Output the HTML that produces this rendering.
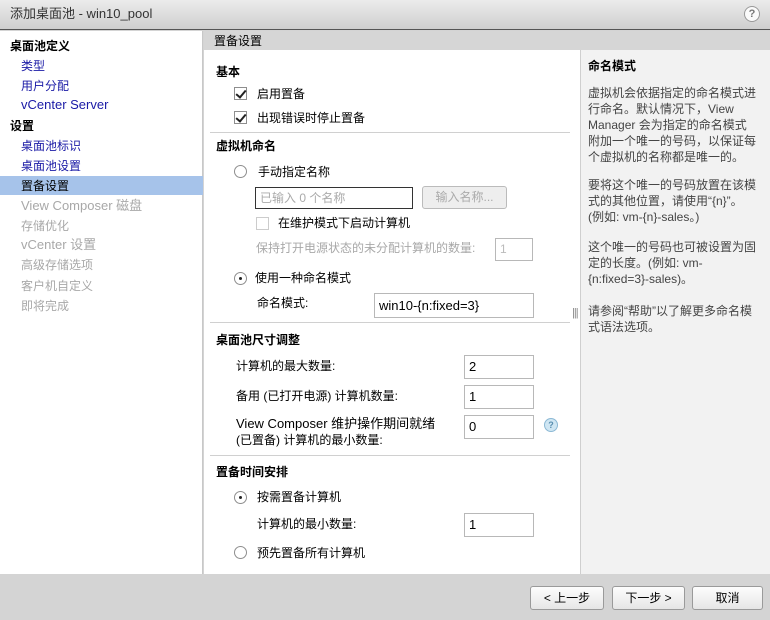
<!DOCTYPE html>
<html><head><meta charset="utf-8"><style>
*{margin:0;padding:0;box-sizing:border-box}
body{width:770px;height:620px;overflow:hidden;background:#d4d4d4;font-family:"Liberation Sans","Noto Sans CJK SC",sans-serif;font-size:12px;color:#000;position:relative}
.a{position:absolute;white-space:nowrap;line-height:14px}
.b{font-weight:bold}
.l{color:#1a1aa6}
.g{color:#a8a8a8}
.cb{position:absolute;width:13px;height:13px;border:1px solid #8e8e8e;background:#fff}
.cb.on::after{content:"";position:absolute;left:3px;top:0px;width:4px;height:8px;border:solid #222;border-width:0 2px 2px 0;transform:rotate(40deg)}
.rd{position:absolute;width:13px;height:13px;border:1px solid #8e8e8e;border-radius:50%;background:#fff}
.rd.on::after{content:"";position:absolute;left:4px;top:4px;width:3px;height:3px;border-radius:50%;background:#222}
.in{position:absolute;border:1px solid #b8b8b8;background:#fff;padding-left:4px;line-height:20px;font-size:13px}
.sep{position:absolute;left:210px;width:360px;height:1px;background:#d0d0d0}
.btn{position:absolute;top:586px;height:24px;border:1px solid #9a9a9a;border-radius:3px;background:linear-gradient(#fdfdfd,#e6e6e6);text-align:center;line-height:22px;font-size:12px}
</style></head><body>
<div style="position:absolute;left:0;top:0;width:770px;height:30px;background:linear-gradient(#ececec,#cfcfcf);border-bottom:1px solid #555"></div>
<div class="a" style="left:10px;top:7px;font-size:13px;color:#333">添加桌面池 - win10_pool</div>
<div style="position:absolute;left:744px;top:6px;width:16px;height:16px;border-radius:50%;background:#fafafa;border:1px solid #999;text-align:center;font-size:11px;line-height:14px;font-weight:bold;color:#777">?</div>

<div style="position:absolute;left:0;top:31px;width:203px;height:543px;background:#fff;border-right:1px solid #c8c8c8"></div>
<div style="position:absolute;left:0;top:176px;width:203px;height:19px;background:#a6c3ea"></div>
<div class="a b" style="left:10px;top:39px">桌面池定义</div>
<div class="a l" style="left:21px;top:59px">类型</div>
<div class="a l" style="left:21px;top:79px">用户分配</div>
<div class="a l" style="left:21px;top:98px;font-size:13px">vCenter Server</div>
<div class="a b" style="left:10px;top:119px">设置</div>
<div class="a l" style="left:21px;top:139px">桌面池标识</div>
<div class="a l" style="left:21px;top:159px">桌面池设置</div>
<div class="a" style="left:21px;top:179px">置备设置</div>
<div class="a g" style="left:21px;top:199px;font-size:13px">View Composer 磁盘</div>
<div class="a g" style="left:21px;top:219px">存储优化</div>
<div class="a g" style="left:21px;top:238px;font-size:13px">vCenter 设置</div>
<div class="a g" style="left:21px;top:258px">高级存储选项</div>
<div class="a g" style="left:21px;top:279px">客户机自定义</div>
<div class="a g" style="left:21px;top:299px">即将完成</div>

<div style="position:absolute;left:204px;top:31px;width:566px;height:19px;background:#d6d6d6"></div>
<div class="a" style="left:214px;top:34px">置备设置</div>
<div style="position:absolute;left:204px;top:50px;width:376px;height:524px;background:#fff"></div>
<div style="position:absolute;left:580px;top:50px;width:190px;height:524px;background:#f2f2f2;border-left:1px solid #cfcfcf"></div>

<div class="a b" style="left:216px;top:65px">基本</div>
<div class="cb on" style="left:234px;top:87px"></div><div class="a" style="left:257px;top:87px">启用置备</div>
<div class="cb on" style="left:234px;top:111px"></div><div class="a" style="left:257px;top:111px">出现错误时停止置备</div>
<div class="sep" style="top:132px"></div>
<div class="a b" style="left:216px;top:139px">虚拟机命名</div>
<div class="rd" style="left:234px;top:165px"></div><div class="a" style="left:258px;top:165px">手动指定名称</div>
<div class="in" style="left:255px;top:187px;width:158px;height:22px;border-color:#333;color:#aaa;font-size:12px">已输入 0 个名称</div>
<div style="position:absolute;left:422px;top:186px;width:85px;height:23px;border:1px solid #bbb;border-radius:3px;background:#eee;color:#aaa;text-align:center;line-height:21px">输入名称...</div>
<div class="cb" style="left:256px;top:217px;border-color:#ccc"></div><div class="a" style="left:278px;top:216px">在维护模式下启动计算机</div>
<div class="a g" style="left:256px;top:241px">保持打开电源状态的未分配计算机的数量:</div>
<div class="in" style="left:495px;top:238px;width:38px;height:23px;color:#bbb;font-size:12px">1</div>
<div class="rd on" style="left:234px;top:272px"></div><div class="a" style="left:255px;top:271px">使用一种命名模式</div>
<div class="a" style="left:257px;top:296px">命名模式:</div>
<div class="in" style="left:374px;top:293px;width:160px;height:25px;line-height:23px">win10-{n:fixed=3}</div>
<div class="a" style="left:572px;top:306px;font-size:11px;color:#888;letter-spacing:-1px">|||</div>
<div class="sep" style="top:322px"></div>
<div class="a b" style="left:216px;top:333px">桌面池尺寸调整</div>
<div class="a" style="left:236px;top:359px">计算机的最大数量:</div>
<div class="in" style="left:464px;top:355px;width:70px;height:24px;line-height:22px">2</div>
<div class="a" style="left:236px;top:389px">备用 (已打开电源) 计算机数量:</div>
<div class="in" style="left:464px;top:385px;width:70px;height:24px;line-height:22px">1</div>
<div class="a" style="left:236px;top:417px;font-size:13px">View Composer 维护操作期间就绪</div>
<div class="a" style="left:236px;top:433px">(已置备) 计算机的最小数量:</div>
<div class="in" style="left:464px;top:415px;width:70px;height:24px;line-height:22px">0</div>
<div style="position:absolute;left:544px;top:418px;width:14px;height:14px;border-radius:50%;background:#cfe6f3;border:1px solid #8bb8d4;text-align:center;font-size:9px;line-height:12px;color:#5a8fb0;font-weight:bold">?</div>
<div class="sep" style="top:455px"></div>
<div class="a b" style="left:216px;top:465px">置备时间安排</div>
<div class="rd on" style="left:234px;top:491px"></div><div class="a" style="left:257px;top:490px">按需置备计算机</div>
<div class="a" style="left:257px;top:517px">计算机的最小数量:</div>
<div class="in" style="left:464px;top:513px;width:70px;height:24px;line-height:22px">1</div>
<div class="rd" style="left:234px;top:546px"></div><div class="a" style="left:257px;top:546px">预先置备所有计算机</div>

<div class="a b" style="left:588px;top:59px">命名模式</div>
<div class="a" style="left:588px;top:85px;line-height:16px;color:#444">虚拟机会依据指定的命名模式进<br>行命名。默认情况下，View<br>Manager 会为指定的命名模式<br>附加一个唯一的号码，以保证每<br>个虚拟机的名称都是唯一的。</div>
<div class="a" style="left:588px;top:177px;line-height:16px;color:#444">要将这个唯一的号码放置在该模<br>式的其他位置，请使用“{n}”。<br>(例如: vm-{n}-sales。)</div>
<div class="a" style="left:588px;top:239px;line-height:16px;color:#444">这个唯一的号码也可被设置为固<br>定的长度。(例如: vm-<br>{n:fixed=3}-sales)。</div>
<div class="a" style="left:588px;top:303px;line-height:16px;color:#444">请参阅“帮助”以了解更多命名模<br>式语法选项。</div>

<div class="btn" style="left:530px;width:74px">&lt; 上一步</div>
<div class="btn" style="left:612px;width:73px">下一步 &gt;</div>
<div class="btn" style="left:692px;width:71px">取消</div>
</body></html>
